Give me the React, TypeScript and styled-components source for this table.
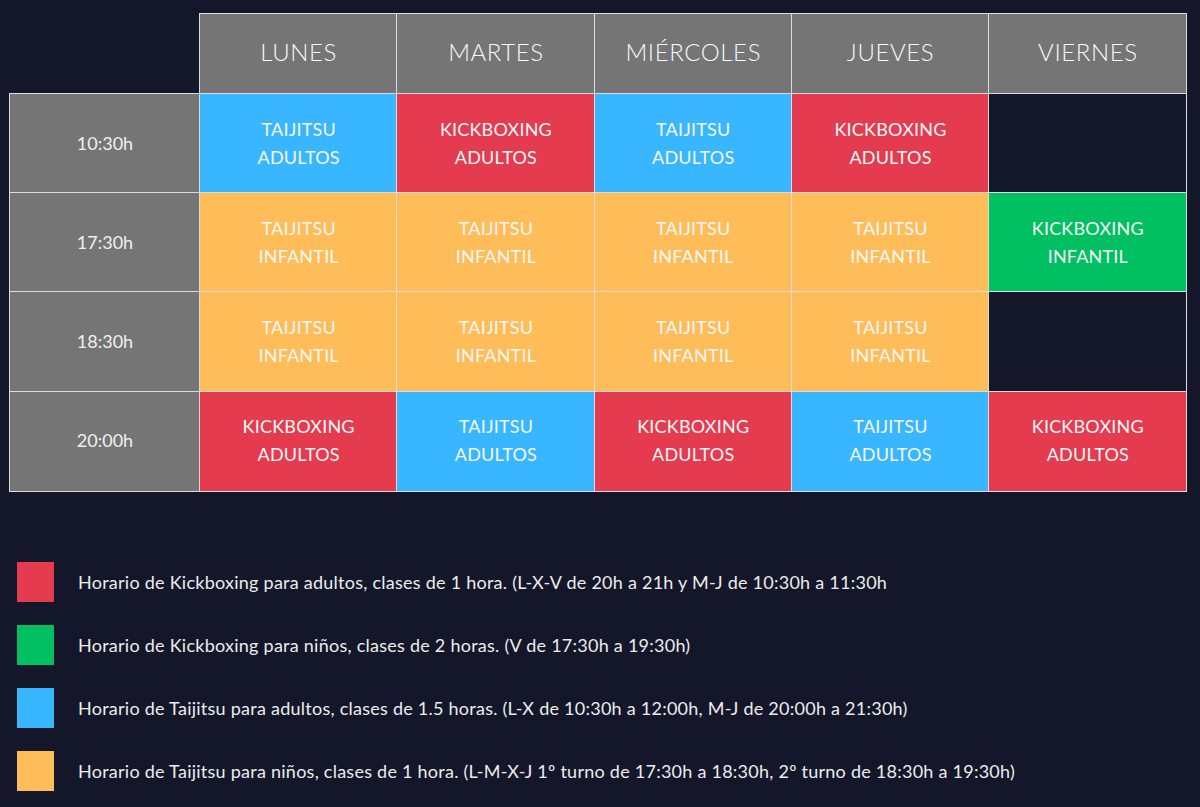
import React from "react";
import styled, { createGlobalStyle } from "styled-components";

const Global = createGlobalStyle`
  html, body { margin: 0; padding: 0; background: #131729; }
  body { font-family: Lato, "Open Sans", sans-serif; color: #f2f2f2; }
`;

const Page = styled.div`
  width: 1200px;
  height: 807px;
  box-sizing: border-box;
  padding: 14px 0 0 10px;
  background: #131729;
  overflow: hidden;
`;

const Grid = styled.div`
  display: grid;
  grid-template-columns: 190px repeat(5, 197.3px);
  grid-template-rows: 80px repeat(4, 99.2px);
  width: max-content;
`;

const Corner = styled.div``;

const Cell = styled.div<{ $bg: string }>`
  background: ${(p) => p.$bg};
  box-shadow: 0 0 0 1px #dcdcdc;
  display: flex;
  flex-direction: column;
  align-items: center;
  justify-content: center;
  text-align: center;
`;

const HeadCell = styled(Cell)`
  font-size: 24px;
  font-weight: 300;
  letter-spacing: 0.6px;
  color: #f8f8f8;
  padding-bottom: 6px;
`;

const TimeCell = styled(Cell)`
  font-size: 18px;
  font-weight: 400;
  color: #f0f0f0;
  padding-bottom: 2px;
`;

const ClassCell = styled(Cell)`
  font-size: 18px;
  line-height: 28px;
  color: #f7f7f7;
  letter-spacing: 0.2px;
  padding-bottom: 2px;
`;

const Legend = styled.div`
  margin-top: 71px;
  margin-left: 7px;
  display: flex;
  flex-direction: column;
  gap: 23px;
`;

const LegendRow = styled.div`
  display: flex;
  align-items: center;
  gap: 24px;
`;

const Swatch = styled.div<{ $bg: string }>`
  width: 37px;
  height: 40px;
  background: ${(p) => p.$bg};
  flex: none;
`;

const LegendText = styled.span`
  font-size: 18px;
  color: #ececec;
  letter-spacing: 0.25px;
`;

const C = {
  head: "#757575",
  red: "#e43b4f",
  blue: "#38b6ff",
  orange: "#ffbd59",
  green: "#00c061",
  none: "#131729",
};

type Slot = { c: keyof typeof C; a?: string; b?: string };

const days = ["LUNES", "MARTES", "MIÉRCOLES", "JUEVES", "VIERNES"];
const TA: Slot = { c: "blue", a: "TAIJITSU", b: "ADULTOS" };
const KA: Slot = { c: "red", a: "KICKBOXING", b: "ADULTOS" };
const TI: Slot = { c: "orange", a: "TAIJITSU", b: "INFANTIL" };
const KI: Slot = { c: "green", a: "KICKBOXING", b: "INFANTIL" };
const NO: Slot = { c: "none" };

const rows: { time: string; slots: Slot[] }[] = [
  { time: "10:30h", slots: [TA, KA, TA, KA, NO] },
  { time: "17:30h", slots: [TI, TI, TI, TI, KI] },
  { time: "18:30h", slots: [TI, TI, TI, TI, NO] },
  { time: "20:00h", slots: [KA, TA, KA, TA, KA] },
];

const legend: { c: keyof typeof C; t: string }[] = [
  { c: "red", t: "Horario de Kickboxing para adultos, clases de 1 hora. (L-X-V de 20h a 21h y M-J de 10:30h a 11:30h" },
  { c: "green", t: "Horario de Kickboxing para niños, clases de 2 horas. (V de 17:30h a 19:30h)" },
  { c: "blue", t: "Horario de Taijitsu para adultos, clases de 1.5 horas. (L-X de 10:30h a 12:00h, M-J de 20:00h a 21:30h)" },
  { c: "orange", t: "Horario de Taijitsu para niños, clases de 1 hora. (L-M-X-J 1º turno de 17:30h a 18:30h, 2º turno de 18:30h a 19:30h)" },
];

export default function App() {
  return (
    <Page>
      <Global />
      <Grid>
        <Corner />
        {days.map((d) => (
          <HeadCell key={d} $bg={C.head}>{d}</HeadCell>
        ))}
        {rows.map((r) => (
          <React.Fragment key={r.time}>
            <TimeCell $bg={C.head}>{r.time}</TimeCell>
            {r.slots.map((s, i) => (
              <ClassCell key={i} $bg={C[s.c]}>
                {s.a && <span>{s.a}</span>}
                {s.b && <span>{s.b}</span>}
              </ClassCell>
            ))}
          </React.Fragment>
        ))}
      </Grid>
      <Legend>
        {legend.map((l) => (
          <LegendRow key={l.c}>
            <Swatch $bg={C[l.c]} />
            <LegendText>{l.t}</LegendText>
          </LegendRow>
        ))}
      </Legend>
    </Page>
  );
}
